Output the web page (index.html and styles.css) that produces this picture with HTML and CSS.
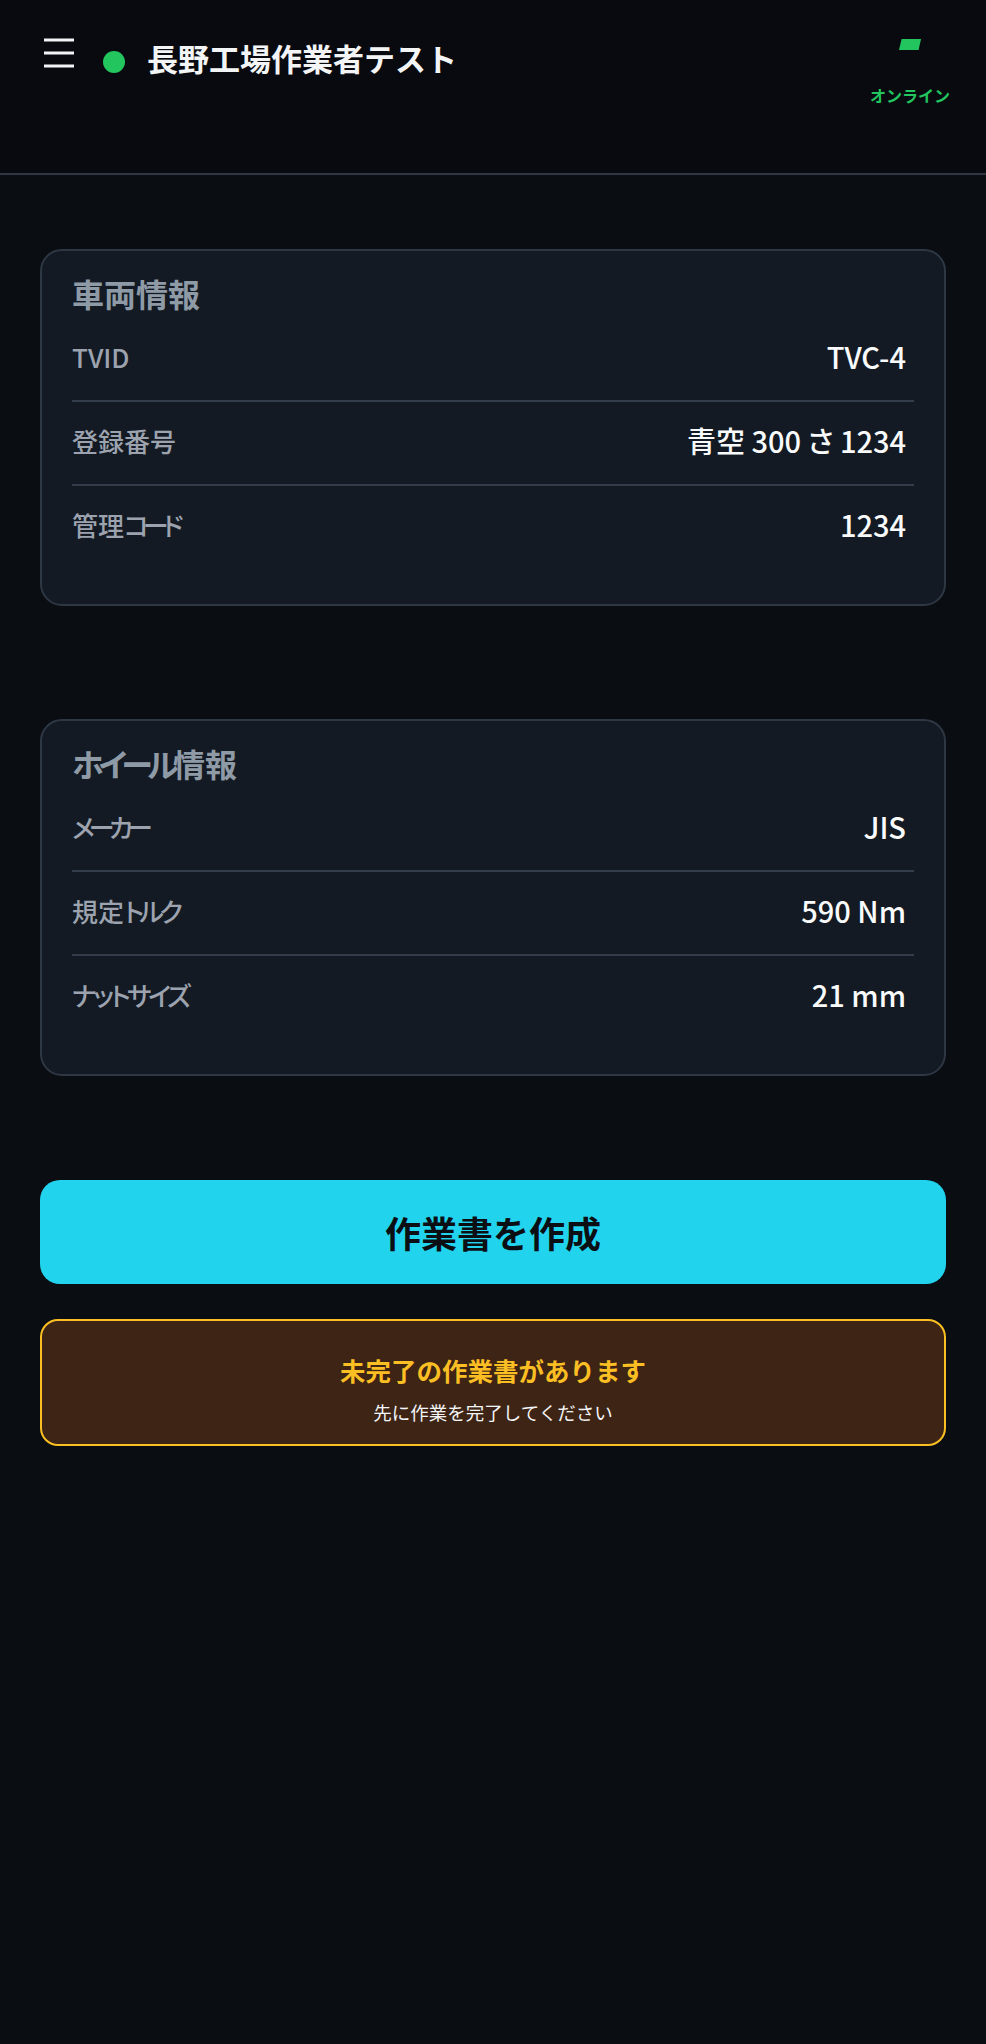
FILE: index.html
```html
<!DOCTYPE html>
<html lang="ja">
<head>
<meta charset="utf-8">
<title>長野工場作業者テスト</title>
<link rel="stylesheet" href="styles.css">
</head>
<body>
<header class="topbar">
  <div class="topbar-left">
    <svg class="menu-icon" width="30" height="34" viewBox="0 0 30 34" aria-hidden="true">
      <rect x="0" y="2.5" width="30" height="3" fill="#f3f4f6"/>
      <rect x="0" y="15.5" width="30" height="3" fill="#f3f4f6"/>
      <rect x="0" y="28.5" width="30" height="3" fill="#f3f4f6"/>
    </svg>
    <span class="status-dot"></span>
    <h1 class="title">長野工場作業者テスト</h1>
  </div>
  <div class="conn">
    <svg class="conn-icon" width="22" height="11" viewBox="0 0 22 11" aria-hidden="true">
      <polygon points="2.6,0 22,0 19.6,11 0,11" fill="#22c55e"/>
    </svg>
    <span class="conn-label">オンライン</span>
  </div>
</header>

<main class="content">
  <section class="card">
    <h2 class="card-title">車両情報</h2>
    <div class="row"><span class="label">TVID</span><span class="value">TVC-4</span></div>
    <div class="row"><span class="label">登録番号</span><span class="value">青空 300 さ 1234</span></div>
    <div class="row"><span class="label">管理<span class="kana kana-bar">コード</span></span><span class="value">1234</span></div>
  </section>

  <section class="card card-second">
    <h2 class="card-title"><span class="kana">ホイール</span>情報</h2>
    <div class="row"><span class="label"><span class="kana kana-bar">メーカー</span></span><span class="value">JIS</span></div>
    <div class="row"><span class="label">規定<span class="kana">トルク</span></span><span class="value">590 Nm</span></div>
    <div class="row"><span class="label"><span class="kana kana-tight">ナットサイズ</span></span><span class="value">21 mm</span></div>
  </section>

  <button class="primary-btn" type="button">作業書を作成</button>

  <div class="notice">
    <p class="notice-title">未完了の作業書があります</p>
    <p class="notice-sub">先に作業を完了してください</p>
  </div>
</main>
</body>
</html>
```

FILE: styles.css
```css
* {
  box-sizing: border-box;
}

html, body {
  margin: 0;
  padding: 0;
}

body {
  background: #0a0d12;
  color: #f3f4f6;
  font-family: "Noto Sans CJK JP", "Noto Sans", sans-serif;
  min-height: 2044px;
}

.topbar {
  display: flex;
  justify-content: space-between;
  align-items: flex-start;
  height: 175px;
  padding: 36px 36px 0 44px;
  background: #080a0f;
  border-bottom: 2px solid #2f3744;
}

.topbar-left {
  display: flex;
  align-items: flex-start;
}

.menu-icon {
  display: block;
}

.status-dot {
  width: 22px;
  height: 22px;
  border-radius: 50%;
  background: #22c55e;
  margin: 15px 0 0 29px;
}

.title {
  margin: -1px 0 0 22px;
  font-size: 31px;
  line-height: 46px;
  font-weight: 700;
  color: #f3f4f6;
}

.conn {
  display: flex;
  flex-direction: column;
  align-items: center;
}

.conn-icon {
  display: block;
  margin-top: 3px;
}

.conn-label {
  margin-top: 33px;
  font-size: 16px;
  line-height: 24px;
  font-weight: 700;
  color: #22c55e;
}

.content {
  display: flex;
  flex-direction: column;
  padding: 74px 40px 0 40px;
}

.card {
  background: #131a23;
  border: 2px solid #2e3744;
  border-radius: 22px;
  padding: 20px 30px 36px 30px;
}

.card-second {
  margin-top: 113px;
}

.card-title {
  margin: 0 0 3px 0;
  font-size: 32px;
  line-height: 44px;
  font-weight: 700;
  color: #8f9aa7;
  font-feature-settings: "palt";
}

.kana {
  letter-spacing: -0.17em;
}

.kana-bar {
  letter-spacing: -0.22em;
}

.kana-tight {
  letter-spacing: -0.13em;
}

.row {
  display: flex;
  justify-content: space-between;
  align-items: center;
  height: 84px;
  padding: 0 8px 6px 0;
  border-bottom: 2px solid #333d4b;
}

.row:last-child {
  height: 82px;
  border-bottom: none;
}

.label {
  font-size: 26px;
  font-weight: 500;
  color: #9ca3af;
  font-feature-settings: "palt";
}

.value {
  font-size: 29px;
  font-weight: 500;
  color: #f9fafb;
  font-feature-settings: "palt";
}

.primary-btn {
  margin-top: 104px;
  height: 104px;
  border: none;
  border-radius: 20px;
  background: #22d3ee;
  color: #0b0f14;
  font-family: "Noto Sans CJK JP", "Noto Sans", sans-serif;
  font-size: 36px;
  font-weight: 700;
  line-height: 104px;
  padding: 0;
}

.notice {
  margin-top: 35px;
  border: 2px solid #fbbf24;
  border-radius: 18px;
  background: #3d2415;
  padding: 31px 20px 18px 20px;
  text-align: center;
}

.notice-title {
  margin: 0;
  font-size: 25.5px;
  line-height: 36px;
  font-weight: 700;
  color: #fbbf24;
}

.notice-sub {
  margin: 10px 0 0 0;
  font-size: 18.5px;
  line-height: 28px;
  font-weight: 400;
  color: #f3f4f6;
}
```
